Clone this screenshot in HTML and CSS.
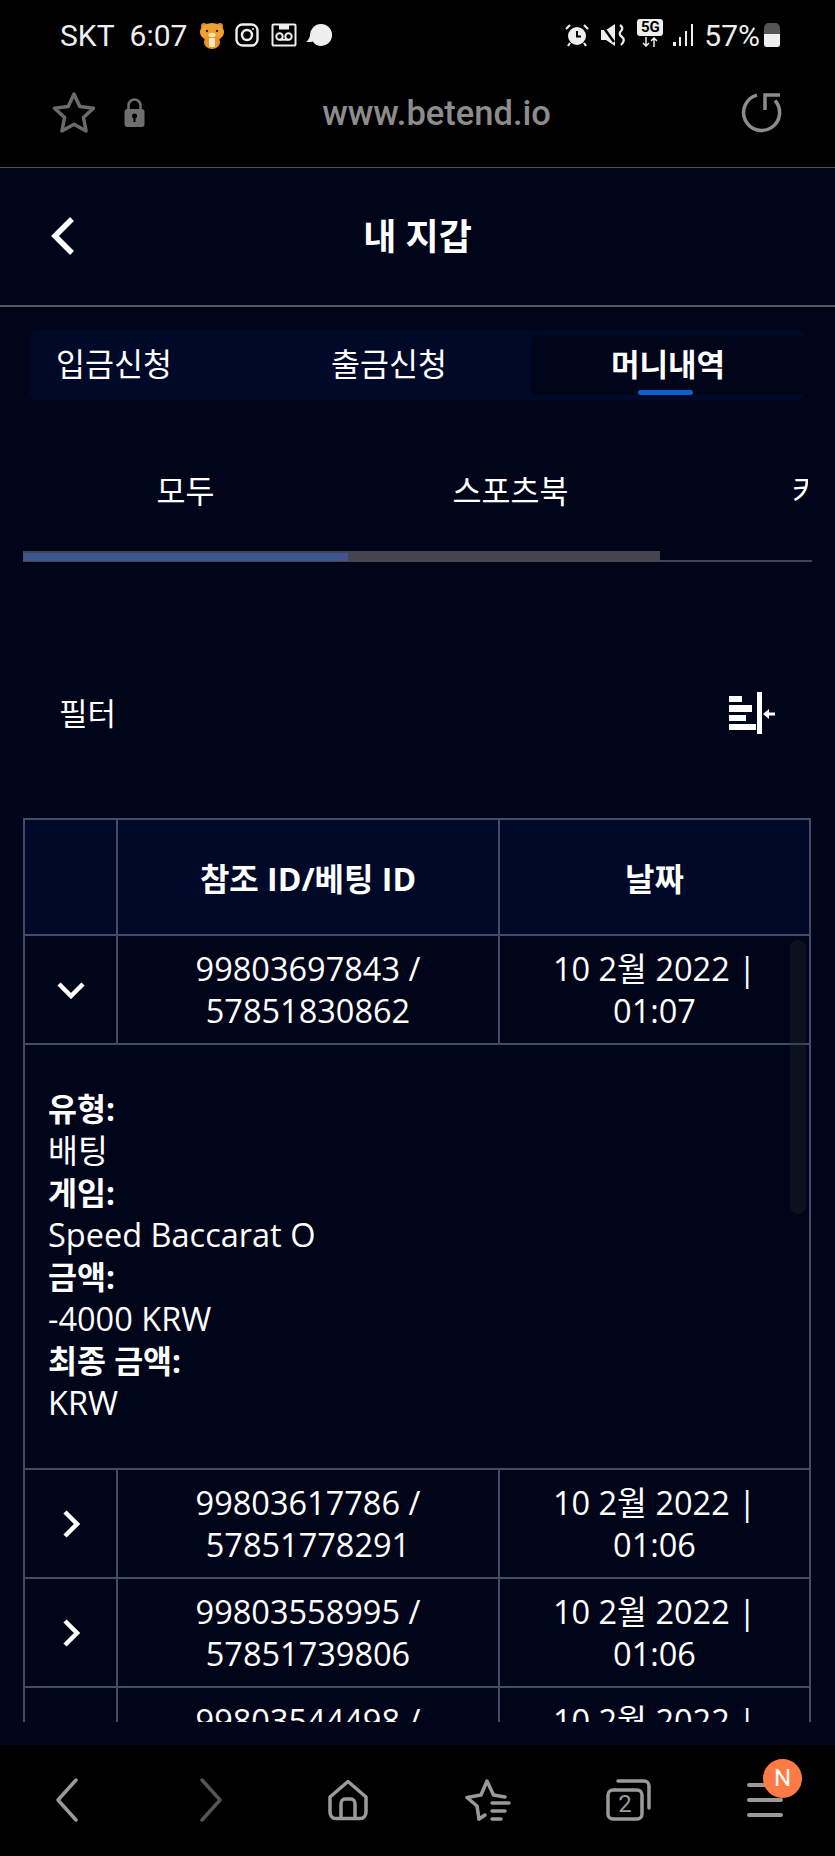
FILE: index.html
```html
<!DOCTYPE html>
<html lang="ko">
<head>
    <meta charset="UTF-8">
    <meta name="viewport" content="width=device-width, initial-scale=1.0">
    <title>내 지갑</title>
    <link rel="stylesheet" href="styles.css">
</head>
<body>
    <div class="phone">
        <div class="status-bar">
            <span class="status-text carrier">SKT</span>
            <span class="status-text clock">6:07</span>
            <svg class="st-bear" width="26" height="27" viewBox="0 0 26 27">
                <circle cx="5" cy="4" r="3" fill="#e08a1e"/>
                <circle cx="21" cy="4" r="3" fill="#e08a1e"/>
                <ellipse cx="13" cy="10" rx="12" ry="9" fill="#f0a030"/>
                <ellipse cx="13" cy="20" rx="8" ry="7" fill="#e8962a"/>
                <circle cx="8" cy="9" r="1.2" fill="#3a2408"/>
                <circle cx="18" cy="9" r="1.2" fill="#3a2408"/>
                <ellipse cx="13" cy="13" rx="3.5" ry="2.2" fill="#fbe3b0"/>
                <rect x="10" y="16" width="6" height="9" rx="1" fill="#fbe6c8"/>
            </svg>
            <svg class="st-insta" width="24" height="24" viewBox="0 0 24 24" fill="none" stroke="#eee" stroke-width="2.4">
                <rect x="1.5" y="1.5" width="21" height="21" rx="6"/>
                <circle cx="12" cy="12" r="5"/>
                <circle cx="18" cy="6" r="1" fill="#eee" stroke="none"/>
            </svg>
            <svg class="st-voice" width="26" height="24" viewBox="0 0 26 24" fill="none" stroke="#eee" stroke-width="2">
                <rect x="1.5" y="1.5" width="23" height="21" rx="1"/>
                <path d="M9 1.5v4h8v-4" fill="#eee"/>
                <circle cx="8.5" cy="13.5" r="3.2"/>
                <circle cx="17.5" cy="13.5" r="3.2"/>
                <path d="M8.5 16.7h9"/>
            </svg>
            <svg class="st-bubble" width="26" height="22" viewBox="0 0 26 22">
                <path d="M15 0a11 11 0 1 1-4.500 21c-1.500-.7-3-2-3.500-3.500-1.500.5-4 .8-7 .5 2-1.500 3.500-3.500 4-6.500A11 11 0 0 1 15 0z" fill="#eee"/>
            </svg>
            <span class="status-spacer"></span>
            <svg class="st-alarm" width="24" height="24" viewBox="0 0 24 24">
                <circle cx="12" cy="13" r="9" fill="#eee"/>
                <path d="M12 8v5.500h4" fill="none" stroke="#000" stroke-width="2"/>
                <path d="M1 6l4-4M23 6l-4-4M5 20l-2 3M19 20l2 3" stroke="#eee" stroke-width="2.2" fill="none"/>
            </svg>
            <svg class="st-mute" width="24" height="24" viewBox="0 0 24 24">
                <path d="M0 7h5l9-6v22l-9-6H0z" fill="#eee"/>
                <path d="M0 1l13 18" stroke="#000" stroke-width="2.500"/>
                <path d="M19 2q4 3 1 6t1 6-1 8" fill="none" stroke="#eee" stroke-width="2.200"/>
            </svg>
            <div class="st-5g">
                <span class="st-5g-label">5G</span>
                <svg width="20" height="10" viewBox="0 0 20 10" fill="none" stroke="#eee" stroke-width="1.500">
                    <path d="M6 0v9M3 6l3 3 3-3M14 10V1M11 4l3-3 3 3"/>
                </svg>
            </div>
            <svg class="st-signal" width="21" height="22" viewBox="0 0 21 22" fill="#eee">
                <rect x="0" y="18" width="3" height="4"/>
                <rect x="6" y="13" width="2" height="9"/>
                <rect x="12" y="7" width="2" height="15"/>
                <rect x="18" y="0" width="2" height="22"/>
            </svg>
            <span class="status-text percent">57%</span>
            <div class="st-battery"><div class="st-battery-fill"></div></div>
        </div>

        <div class="url-bar">
            <svg class="url-star" width="44" height="44" viewBox="0 0 44 44" fill="none" stroke="#6b6b6b" stroke-width="3.500" stroke-linejoin="round">
                <path d="M22 3l5.800 12.600 13.700 1.600-10.100 9.300 2.700 13.500L22 33.300 9.900 40l2.700-13.500L2.500 17.200l13.700-1.600z"/>
            </svg>
            <svg class="url-lock" width="21" height="29" viewBox="0 0 21 29">
                <path d="M4.500 12V7.500a6 6 0 0 1 12 0V12" fill="none" stroke="#6f6f6f" stroke-width="2.500"/>
                <rect x="0.500" y="11" width="20" height="18" rx="3" fill="#6f6f6f"/>
                <circle cx="10.500" cy="18" r="2.500" fill="#000"/>
                <rect x="9.500" y="18" width="2" height="6" fill="#000"/>
            </svg>
            <span class="url-text">www.betend.io</span>
            <svg class="url-reload" width="42" height="42" viewBox="0 0 42 42" fill="none" stroke="#8c8c8c" stroke-width="3.500">
                <path d="M17 3.100A18 18 0 1 0 35 8.500"/>
                <path d="M40 3H25v15"/>
            </svg>
        </div>

        <div class="wallet">
            <div class="wallet-head">
                <svg class="back-arrow" width="24" height="38" viewBox="0 0 24 38" fill="none" stroke="#fff" stroke-width="5.500">
                    <path d="M21 2L4 19l17 17"/>
                </svg>
                <h1 class="wallet-title">내 지갑</h1>
            </div>

            <div class="money-tabs">
                <div class="money-tab">입금신청</div>
                <div class="money-tab">출금신청</div>
                <div class="money-tab active">머니내역</div>
            </div>

            <div class="sub-tabs">
                <div class="sub-tab">모두</div>
                <div class="sub-tab">스포츠북</div>
                <div class="sub-tab">카지노</div>
            </div>
            <div class="sub-track">
                <div class="sub-thumb"><div class="sub-active"></div></div>
            </div>

            <div class="filter-row">
                <span class="filter-label">필터</span>
                <svg class="filter-icon" width="46" height="42" viewBox="0 0 46 42" fill="#fff">
                    <rect x="0" y="4" width="13" height="6"/>
                    <rect x="0" y="13" width="23" height="7"/>
                    <rect x="0" y="23" width="17" height="6"/>
                    <rect x="0" y="32" width="27" height="6"/>
                    <rect x="28" y="0" width="5" height="42"/>
                    <path d="M46 20.500h-6v-3.500l-6 5 6 5v-3.500h6z"/>
                </svg>
            </div>

            <div class="table-wrap">
                <table class="history">
                    <colgroup>
                        <col class="col-toggle">
                        <col class="col-id">
                        <col class="col-date">
                    </colgroup>
                    <thead>
                        <tr>
                            <th></th>
                            <th>참조 ID/베팅 ID</th>
                            <th>날짜</th>
                        </tr>
                    </thead>
                    <tbody>
                        <tr>
                            <td>
                                <svg class="chev" width="30" height="18" viewBox="0 0 30 18" fill="none" stroke="#fff" stroke-width="4.500"><path d="M3 3l12 12L27 3"/></svg>
                            </td>
                            <td>99803697843 / 57851830862</td>
                            <td>10 2월 2022 | 01:07</td>
                        </tr>
                        <tr>
                            <td class="detail" colspan="3">
                                <strong>유형:</strong><br>배팅<br>
                                <strong>게임:</strong><br>Speed Baccarat O<br>
                                <strong>금액:</strong><br>-4000 KRW<br>
                                <strong>최종 금액:</strong><br>KRW
                            </td>
                        </tr>
                        <tr>
                            <td>
                                <svg class="chev" width="18" height="28" viewBox="0 0 18 28" fill="none" stroke="#fff" stroke-width="4.500"><path d="M3 2l12 12L3 26"/></svg>
                            </td>
                            <td>99803617786 / 57851778291</td>
                            <td>10 2월 2022 | 01:06</td>
                        </tr>
                        <tr>
                            <td>
                                <svg class="chev" width="18" height="28" viewBox="0 0 18 28" fill="none" stroke="#fff" stroke-width="4.500"><path d="M3 2l12 12L3 26"/></svg>
                            </td>
                            <td>99803558995 / 57851739806</td>
                            <td>10 2월 2022 | 01:06</td>
                        </tr>
                        <tr>
                            <td></td>
                            <td>99803544498 / 57851730000</td>
                            <td>10 2월 2022 | 01:06</td>
                        </tr>
                    </tbody>
                </table>
                <div class="table-scroll"></div>
            </div>
        </div>

        <div class="bottom-bar">
            <svg class="nav-back" width="24" height="46" viewBox="0 0 24 46" fill="none" stroke="#9a9a9a" stroke-width="3.500" stroke-linecap="round" stroke-linejoin="round">
                <path d="M21 3L3 23l18 20"/>
            </svg>
            <svg class="nav-forward" width="24" height="46" viewBox="0 0 24 46" fill="none" stroke="#555" stroke-width="3.500" stroke-linecap="round" stroke-linejoin="round">
                <path d="M3 3l18 20L3 43"/>
            </svg>
            <svg class="nav-home" width="42" height="42" viewBox="0 0 42 42" fill="none" stroke="#9a9a9a" stroke-width="3.500" stroke-linejoin="round">
                <path d="M21 2.500L3 18v15c0 4 2.500 6.500 6 6.500h24c3.500 0 6-2.500 6-6.500V18z"/>
                <path d="M14 39V25c0-3 2-5 4-5h6c2 0 4 2 4 5v14"/>
            </svg>
            <svg class="nav-bookmarks" width="46" height="44" viewBox="0 0 46 44" fill="none" stroke="#9a9a9a" stroke-width="3.500" stroke-linecap="round" stroke-linejoin="round">
                <path d="M14 41l-2-13L2 19.500l14-2.500L22 3l6.500 14 11.500 2"/>
                <path d="M14 41l6-4"/>
                <path d="M27 25h17M27 33h13M27 41h9" stroke-width="3.500"/>
            </svg>
            <div class="nav-tabs">
                <svg width="46" height="42" viewBox="0 0 46 42" fill="none" stroke="#9a9a9a" stroke-width="3.500" stroke-linecap="round" stroke-linejoin="round">
                    <path d="M12 2h26c3 0 5 2 5 5v22"/>
                    <rect x="2" y="11" width="34" height="29" rx="5"/>
                </svg>
                <span class="nav-tabs-count">2</span>
            </div>
            <div class="nav-menu">
                <span class="nav-menu-line"></span>
                <span class="nav-menu-line"></span>
                <span class="nav-menu-line"></span>
                <span class="nav-badge">N</span>
            </div>
        </div>
    </div>
</body>
</html>
```

FILE: styles.css
```css
* {
    box-sizing: border-box;
}

body {
    margin: 0;
    padding: 0;
    background-color: #000;
    font-family: "Open Sans", "Noto Sans CJK KR", sans-serif;
    color: #fff;
}

.phone {
    display: flex;
    flex-direction: column;
    width: 835px;
    height: 1856px;
    overflow: hidden;
}

/* status bar */
.status-bar {
    display: flex;
    align-items: center;
    height: 70px;
    flex: none;
    padding: 0 55px 0 60px;
    background-color: #000;
}

.status-text {
    font-family: Roboto, sans-serif;
    font-size: 30px;
    color: #eee;
}

.status-spacer {
    flex: 1;
}

.clock {
    margin-left: 15px;
}

.st-bear {
    margin-left: 12px;
}

.st-insta {
    margin-left: 10px;
}

.st-voice {
    margin-left: 12px;
}

.st-bubble {
    margin-left: 9px;
}

.st-mute {
    margin-left: 12px;
}

.st-5g {
    display: flex;
    flex-direction: column;
    align-items: center;
    width: 26px;
    margin-left: 12px;
    margin-top: -5px;
}

.st-5g-label {
    width: 26px;
    height: 17px;
    background-color: #eee;
    border-radius: 3px;
    color: #000;
    font-family: Roboto, sans-serif;
    font-size: 15px;
    font-weight: 700;
    line-height: 17px;
    text-align: center;
}

.st-5g svg {
    margin-top: 1px;
}

.st-signal {
    margin-left: 10px;
}

.percent {
    margin-left: 10px;
}

.st-battery {
    display: flex;
    align-items: flex-end;
    width: 16px;
    height: 24px;
    margin-left: 4px;
    background-color: #555;
    border-radius: 5px 5px 3px 3px;
    overflow: hidden;
}

.st-battery-fill {
    width: 100%;
    height: 13px;
    background-color: #eee;
}

/* browser address bar */
.url-bar {
    display: flex;
    align-items: center;
    height: 98px;
    flex: none;
    padding: 0 53px 12px 52px;
    background-color: #000;
    border-bottom: 1px solid #4e4f55;
}

.url-lock {
    margin-left: 28px;
}

.url-text {
    flex: 1;
    padding-right: 12px;
    color: #8c8c8c;
    font-family: Roboto, sans-serif;
    font-size: 34.5px;
    font-weight: 500;
    text-align: center;
}

/* wallet page */
.wallet {
    flex: 1;
    min-height: 0;
    background-color: #00051a;
}

.wallet-head {
    position: relative;
    height: 139px;
    border-bottom: 2px solid #55585f;
    display: flex;
    align-items: center;
    justify-content: center;
    padding-bottom: 4px;
}

.back-arrow {
    position: absolute;
    left: 51px;
    top: 49px;
}

.wallet-title {
    margin: 0;
    font-size: 36px;
    font-weight: 700;
}

.money-tabs {
    display: flex;
    height: 70px;
    margin: 23px 30px 0;
    padding: 5px 0;
    background-color: #000a28;
    border-radius: 8px;
}

.money-tab {
    position: relative;
    display: flex;
    align-items: center;
    flex: none;
    font-size: 31.5px;
    padding-bottom: 6px;
}

.money-tab:nth-child(1) {
    width: 301px;
    padding-left: 26px;
}

.money-tab:nth-child(2) {
    width: 200px;
}

.money-tab.active {
    width: 274px;
    justify-content: center;
    background-color: #00051a;
    border-radius: 6px;
    font-size: 31px;
    font-weight: 700;
}

.money-tab.active::after {
    content: "";
    position: absolute;
    left: 107px;
    bottom: 0;
    width: 55px;
    height: 5px;
    background-color: #0d5fd0;
    border-radius: 3px;
}

.sub-tabs {
    display: flex;
    width: 785px;
    height: 151px;
    margin-left: 23px;
    overflow: hidden;
}

.sub-tab {
    flex: none;
    width: 325px;
    padding-top: 65px;
    font-size: 31.5px;
    line-height: 52px;
    text-align: center;
}

.sub-track {
    height: 11px;
    margin: 0 23px;
    border-bottom: 2px solid #3d4458;
}

.sub-thumb {
    width: 637px;
    height: 11px;
    background-color: #44464f;
    padding-top: 2px;
}

.sub-active {
    width: 325px;
    height: 8px;
    background-color: #3f5590;
}

.filter-row {
    display: flex;
    align-items: center;
    justify-content: space-between;
    height: 60px;
    margin-top: 121px;
    padding: 0 60px 0 59px;
}

.filter-label {
    font-size: 31px;
    position: relative;
    top: -2px;
}

.table-wrap {
    position: relative;
    height: 904px;
    margin: 75px 24px 0 23px;
    overflow: hidden;
}

.history {
    width: 100%;
    table-layout: fixed;
    border-collapse: collapse;
    font-size: 32.5px;
    line-height: 42px;
}

.col-toggle {
    width: 93px;
}

.col-id {
    width: 382px;
}

.history th,
.history td {
    padding: 0 30px;
    border: 2px solid #414c69;
    text-align: center;
    vertical-align: middle;
}

.history th {
    height: 116px;
    padding-top: 3px;
    background-color: #000a28;
    font-size: 32px;
    font-weight: 700;
}

.history td {
    height: 109px;
    font-weight: 400;
}

.history td:first-child {
    padding: 0;
}

.history td.detail {
    height: 425px;
    padding: 0 23px 1px;
    text-align: left;
}

.detail strong {
    font-size: 31.5px;
    font-weight: 700;
}

.chev {
    display: block;
    margin: 0 auto;
}

.table-scroll {
    position: absolute;
    top: 122px;
    right: 5px;
    width: 16px;
    height: 274px;
    background-color: rgba(38, 48, 38, 0.3);
    border-radius: 8px;
}

/* browser bottom bar */
.bottom-bar {
    display: flex;
    align-items: center;
    height: 111px;
    flex: none;
    padding: 0 0 2px 55px;
    background-color: #000;
}

.nav-forward {
    margin-left: 120px;
}

.nav-home {
    margin-left: 104px;
}

.nav-bookmarks {
    margin-left: 96px;
}

.nav-tabs {
    position: relative;
    width: 46px;
    height: 42px;
    margin-left: 95px;
}

.nav-tabs svg {
    display: block;
}

.nav-tabs-count {
    position: absolute;
    left: 2px;
    top: 11px;
    width: 34px;
    color: #9a9a9a;
    font-family: Roboto, sans-serif;
    font-size: 24px;
    line-height: 29px;
    text-align: center;
}

.nav-menu {
    position: relative;
    display: flex;
    flex-direction: column;
    gap: 11px;
    width: 36px;
    margin-left: 95px;
}

.nav-menu-line {
    height: 4px;
    background-color: #9a9a9a;
    border-radius: 2px;
}

.nav-badge {
    position: absolute;
    left: 16px;
    top: -24px;
    width: 39px;
    height: 39px;
    background-color: #ff7a45;
    border-radius: 50%;
    font-family: Roboto, sans-serif;
    font-size: 24px;
    line-height: 39px;
    text-align: center;
}
```
